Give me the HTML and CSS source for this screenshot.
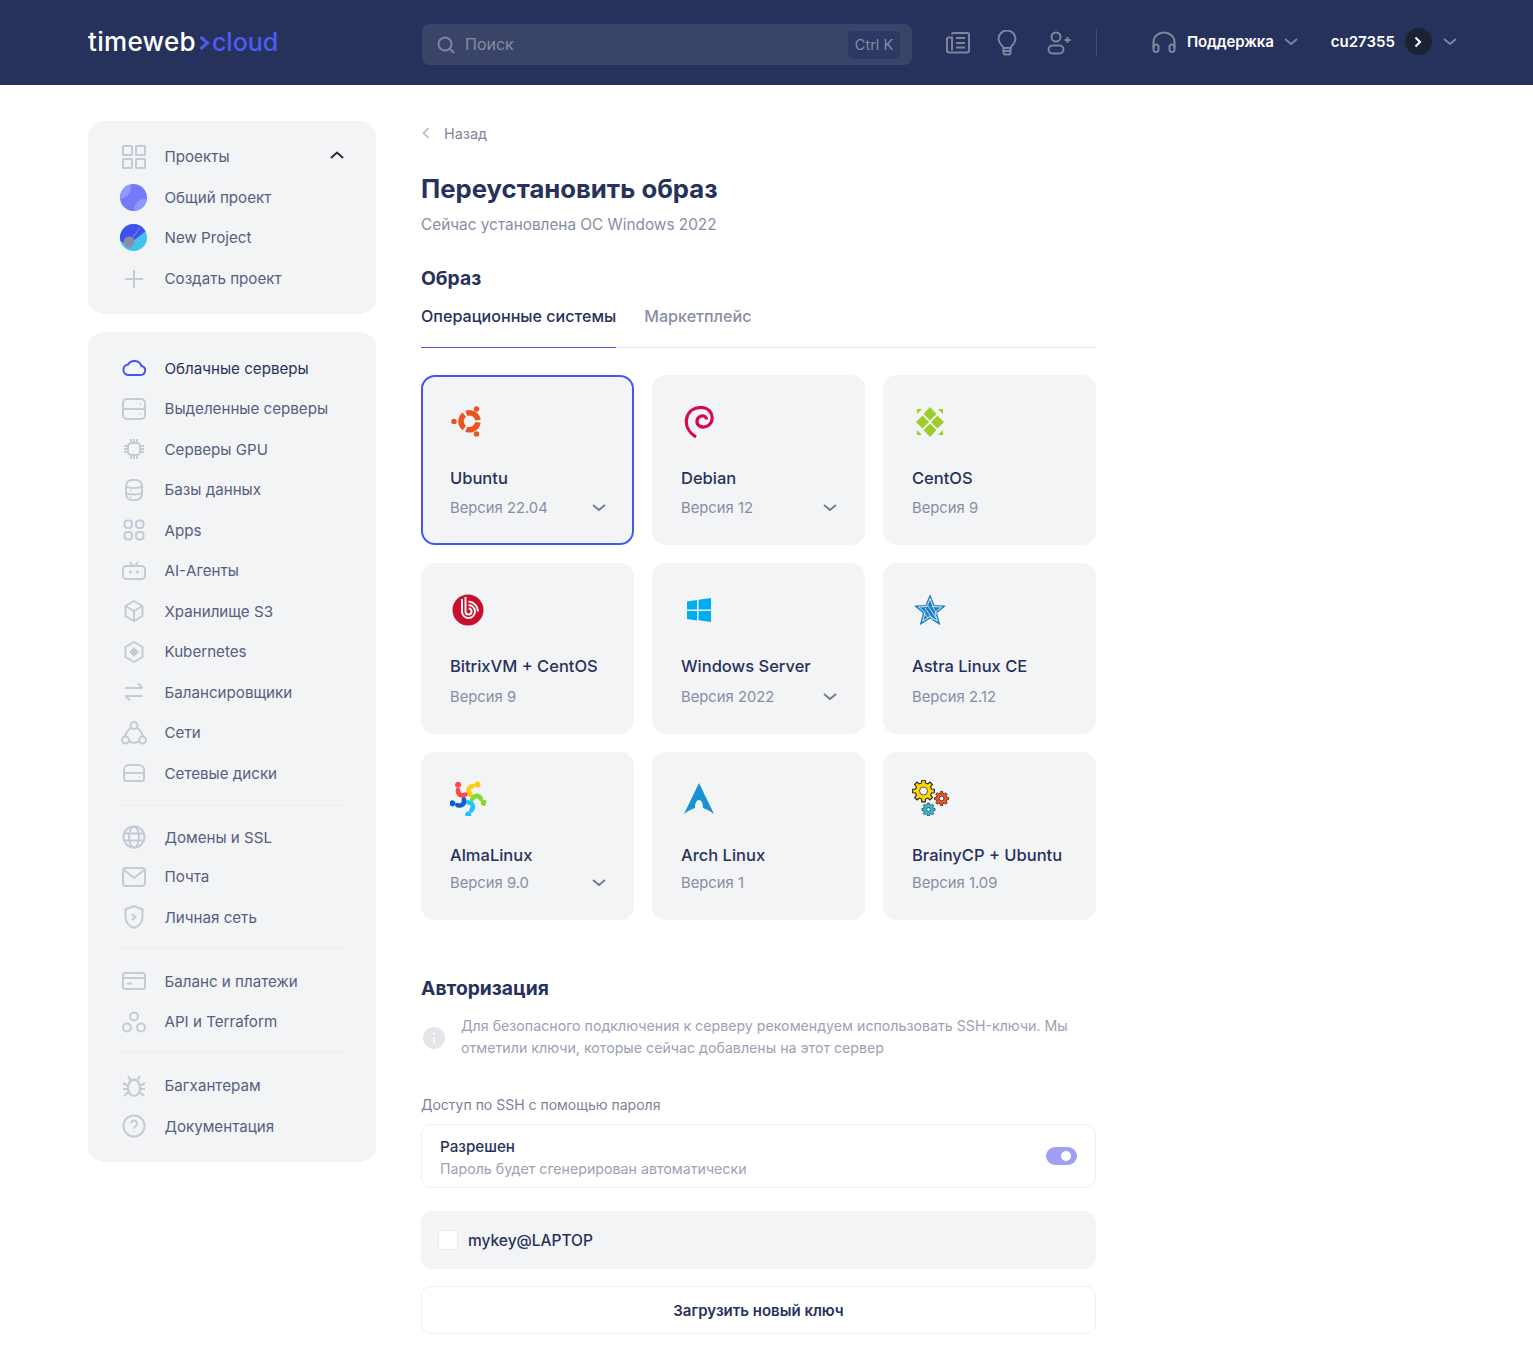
FILE: index.html
```html
<!DOCTYPE html>
<html lang="ru">
<head>
<meta charset="utf-8">
<title>timeweb cloud</title>
<link rel="stylesheet" href="styles.css">
</head>
<body>
<svg class="defs" width="0" height="0"><defs>
<polygon id="gear" points="7.28,-1.81 9.88,-1.56 9.88,1.56 7.28,1.81 6.43,3.86 8.09,5.88 5.88,8.09 3.86,6.43 1.81,7.28 1.56,9.88 -1.56,9.88 -1.81,7.28 -3.86,6.43 -5.88,8.09 -8.09,5.88 -6.43,3.86 -7.28,1.81 -9.88,1.56 -9.88,-1.56 -7.28,-1.81 -6.43,-3.86 -8.09,-5.88 -5.88,-8.09 -3.86,-6.43 -1.81,-7.28 -1.56,-9.88 1.56,-9.88 1.81,-7.28 3.86,-6.43 5.88,-8.09 8.09,-5.88 6.43,-3.86"/>
<path id="blade" d="M2.500 -3.500C-.5 -6.500 -.5 -10.500 4.500 -12" fill="none" stroke-width="4.600" stroke-linecap="round"/>
</defs></svg>
<header class="topbar">
  <div class="logo"><span>timeweb</span><svg class="logo-arrow" viewBox="0 0 12 18" width="12" height="18"><path d="M2.500 3l7 6-7 6" fill="none" stroke="#4b5cf0" stroke-width="3"/></svg><span class="logo-blue">cloud</span></div>
  <div class="search">
    <svg viewBox="0 0 18 18" width="18" height="18" class="tb-ic"><circle cx="8" cy="8" r="6.500"/><path d="M13 13l4 4"/></svg>
    <span class="search-text">Поиск</span>
    <span class="kbd">Ctrl K</span>
  </div>
  <div class="tb-icons">
    <svg viewBox="0 0 24 22" width="24" height="22" class="tb-ic"><path d="M6 2.500a1.500 1.500 0 0 1 1.500-1.500h14a1.500 1.500 0 0 1 1.500 1.500v16a2 2 0 0 1-2 2H3a2 2 0 0 1-2-2V7a1.500 1.500 0 0 1 1.500-1.500H6v13"/><path d="M10 6h9M10 11h9M10 15.500h9"/></svg>
    <svg viewBox="0 0 20 26" width="20" height="26" class="tb-ic"><path d="M6.500 18C6 15.500 1.500 13.500 1.500 9a8.500 8.500 0 0 1 17 0c0 4.500-4.500 6.500-5 9z"/><path d="M6.500 18v4.500a2 2 0 0 0 2 2h3a2 2 0 0 0 2-2V18M7 21h6"/></svg>
    <svg viewBox="0 0 25 24" width="25" height="24" class="tb-ic tb-user"><circle cx="9" cy="6" r="4.500"/><rect x="1.500" y="14.500" width="15" height="8" rx="4"/><path d="M20.500 6v6M17.500 9h6"/></svg>
  </div>
  <div class="tb-sep"></div>
  <div class="support">
    <svg viewBox="0 0 24 22" width="24" height="22" class="tb-ic"><path d="M1.500 17V11a10.500 9.500 0 0 1 21 0v6"/><rect x="1.500" y="13.500" width="5" height="7.500" rx="2.500"/><rect x="17.500" y="13.500" width="5" height="7.500" rx="2.500"/></svg>
    <span class="support-text">Поддержка</span>
    <svg viewBox="0 0 14 8" width="14" height="8" class="tb-chev"><path d="M1 1l6 5 6-5"/></svg>
  </div>
  <div class="user">
    <span class="user-name">cu27355</span>
    <span class="user-badge"><svg viewBox="0 0 8 12" width="8" height="12"><path d="M1.500 1.500L6 6l-4.500 4.500" fill="none" stroke="#fff" stroke-width="2"/></svg></span>
    <svg viewBox="0 0 14 8" width="14" height="8" class="tb-chev"><path d="M1 1l6 5 6-5"/></svg>
  </div>
</header>

<div class="layout">
  <aside class="sidebar">
    <nav class="side-card projects">
      <div class="nav-row head">
        <span class="nav-ic"><svg viewBox="0 0 24 24" width="24" height="24"><rect x="1" y="1" width="9" height="9" rx=".5"/><rect x="14" y="1" width="9" height="9" rx=".5"/><rect x="1" y="14" width="9" height="9" rx=".5"/><rect x="14" y="14" width="9" height="9" rx=".5"/></svg></span>
        <span>Проекты</span>
        <svg class="collapse" viewBox="0 0 14 8" width="14" height="8"><path d="M1 7l6-5.500L13 7" fill="none" stroke="#2b2f3a" stroke-width="2"/></svg>
      </div>
      <div class="nav-row common">
        <span class="nav-ic"><svg class="fill" viewBox="0 0 27 27" width="27" height="27"><defs><clipPath id="a1"><circle cx="13.500" cy="13.500" r="13.500"/></clipPath></defs><g clip-path="url(#a1)"><rect width="27" height="27" fill="#747bfb"/><circle cx="-1" cy="3" r="12" fill="#9297f9"/><circle cx="25" cy="26" r="11" fill="#9297f9"/></g></svg></span>
        <span>Общий проект</span>
      </div>
      <div class="nav-row">
        <span class="nav-ic"><svg class="fill" viewBox="0 0 27 27" width="27" height="27"><defs><clipPath id="a2"><circle cx="13.500" cy="13.500" r="13.500"/></clipPath></defs><g clip-path="url(#a2)"><rect width="27" height="27" fill="#41c3ec"/><path d="M0 0h27v6L8 21 0 17z" fill="#4150ef"/><path d="M9 18L20 4" stroke="#8d90b0" stroke-width="1"/><circle cx="9" cy="18" r="5.500" fill="#8a8da5"/></g></svg></span>
        <span>New Project</span>
      </div>
      <div class="nav-row create">
        <span class="nav-ic"><svg viewBox="0 0 20 20" width="20" height="20"><path d="M10 1v18M1 10h18"/></svg></span>
        <span>Создать проект</span>
      </div>
    </nav>

    <nav class="side-card menu">
      <div class="nav-row active">
        <span class="nav-ic"><svg viewBox="0 0 24 16" width="24" height="16"><path d="M6 15h12.500a4.500 4.500 0 0 0 1-8.900A7.500 7.500 0 0 0 6 4.500 5.300 5.300 0 0 0 6 15z"/></svg></span>
        <span>Облачные серверы</span>
      </div>
      <div class="nav-row">
        <span class="nav-ic"><svg viewBox="0 0 24 22" width="24" height="22"><rect x="1" y="1" width="22" height="20" rx="4"/><path d="M1 11h22M18 6h1M18 16h1"/></svg></span>
        <span>Выделенные серверы</span>
      </div>
      <div class="nav-row">
        <span class="nav-ic"><svg viewBox="0 0 22 22" width="22" height="22"><rect x="5" y="5" width="12" height="12" rx="3.500"/><path d="M8 1v3M11 1v3M14 1v3M8 18v3M11 18v3M14 18v3M1 8h3M1 11h3M1 14h3M18 8h3M18 11h3M18 14h3"/></svg></span>
        <span>Серверы GPU</span>
      </div>
      <div class="nav-row">
        <span class="nav-ic"><svg viewBox="0 0 18 22" width="18" height="22"><rect x="1" y="1" width="16" height="20" rx="6"/><path d="M1 7.500c3 2 13 2 16 0M1 14c3 2 13 2 16 0M5 11.500h1M5 18h1"/></svg></span>
        <span>Базы данных</span>
      </div>
      <div class="nav-row">
        <span class="nav-ic"><svg viewBox="0 0 22 22" width="22" height="22"><rect x="1.500" y="1.500" width="7.500" height="7.500" rx="3"/><rect x="13" y="1.500" width="7.500" height="7.500" rx="3"/><rect x="1.500" y="13" width="7.500" height="7.500" rx="3"/><rect x="13" y="13" width="7.500" height="7.500" rx="3"/></svg></span>
        <span>Apps</span>
      </div>
      <div class="nav-row">
        <span class="nav-ic"><svg viewBox="0 0 24 19" width="24" height="19"><rect x="1" y="5" width="22" height="13" rx="3.500"/><path d="M8 1l3 4M16 1l-3 4"/><circle class="dot" cx="8.500" cy="11" r="1.500"/><circle class="dot" cx="15.500" cy="11" r="1.500"/></svg></span>
        <span>AI-Агенты</span>
      </div>
      <div class="nav-row">
        <span class="nav-ic"><svg viewBox="0 0 20 22" width="20" height="22"><path d="M10 1l8.500 5v10L10 21l-8.500-5V6zM1.500 6l8.500 5 8.500-5M10 11v10"/></svg></span>
        <span>Хранилище S3</span>
      </div>
      <div class="nav-row">
        <span class="nav-ic"><svg viewBox="0 0 20 22" width="20" height="22"><path d="M10 1l8.500 5v10L10 21l-8.500-5V6z"/><circle class="dot" cx="10" cy="11" r="3.500"/><path d="M10 6.500v9M5.500 11h9"/></svg></span>
        <span>Kubernetes</span>
      </div>
      <div class="nav-row">
        <span class="nav-ic"><svg viewBox="0 0 20 20" width="20" height="20"><path d="M1 6h17M14 1.500L18.500 6M1.500 14h17M6 18.500L1.500 14"/></svg></span>
        <span>Балансировщики</span>
      </div>
      <div class="nav-row">
        <span class="nav-ic"><svg viewBox="0 0 26 24" width="26" height="24"><circle cx="13" cy="4.500" r="3.500"/><circle cx="4.500" cy="19" r="3.500"/><circle cx="21.500" cy="19" r="3.500"/><path d="M10.500 6.500C7 9 4.500 12 4 15.500M15.500 6.500C19 9 21.500 12 22 15.500M8 20.500c3 1.500 7 1.500 10 0"/></svg></span>
        <span>Сети</span>
      </div>
      <div class="nav-row">
        <span class="nav-ic"><svg viewBox="0 0 22 18" width="22" height="18"><path d="M1 10V6a5 5 0 0 1 5-5h10a5 5 0 0 1 5 5v4"/><rect x="1" y="9" width="20" height="8" rx="2.500"/><path d="M16 13h1"/></svg></span>
        <span>Сетевые диски</span>
      </div>
      <div class="nav-sep first"></div>
      <div class="nav-row">
        <span class="nav-ic"><svg viewBox="0 0 24 24" width="24" height="24"><circle cx="12" cy="12" r="10.500"/><ellipse cx="12" cy="12" rx="5" ry="10.500"/><path d="M2 8.500h20M2 15.500h20"/></svg></span>
        <span>Домены и SSL</span>
      </div>
      <div class="nav-row mail">
        <span class="nav-ic"><svg viewBox="0 0 24 20" width="24" height="20"><rect x="1" y="1" width="22" height="18" rx="3"/><path d="M2 3l10 8 10-8"/></svg></span>
        <span>Почта</span>
      </div>
      <div class="nav-row">
        <span class="nav-ic"><svg viewBox="0 0 20 24" width="20" height="24"><path d="M10 1l8.500 3.500V12c0 5-3.500 9-8.500 11C5 21 1.500 17 1.500 12V4.500z"/><path d="M8 9l3.500 3L8 15"/></svg></span>
        <span>Личная сеть</span>
      </div>
      <div class="nav-sep"></div>
      <div class="nav-row">
        <span class="nav-ic"><svg viewBox="0 0 24 18" width="24" height="18"><rect x="1" y="1" width="22" height="16" rx="2.500"/><path d="M1 6h22M5 11.500h5"/></svg></span>
        <span>Баланс и платежи</span>
      </div>
      <div class="nav-row">
        <span class="nav-ic"><svg viewBox="0 0 24 22" width="24" height="22"><circle cx="12" cy="5.500" r="4"/><circle cx="5" cy="16.500" r="4"/><circle cx="19" cy="16.500" r="4"/></svg></span>
        <span>API и Terraform</span>
      </div>
      <div class="nav-sep"></div>
      <div class="nav-row">
        <span class="nav-ic"><svg viewBox="0 0 24 24" width="24" height="24"><ellipse cx="12" cy="14" rx="6" ry="8"/><path d="M7 8.500c1-2 3-3 5-3s4 1 5 3M8.500 6L6 2M15.500 6L18 2M1 9l5.500 3M23 9l-5.500 3M1 15h5M23 15h-5M2 22l4.500-4M22 22l-4.500-4"/></svg></span>
        <span>Багхантерам</span>
      </div>
      <div class="nav-row">
        <span class="nav-ic"><svg viewBox="0 0 24 24" width="24" height="24"><circle cx="12" cy="12" r="10.500"/><path d="M9 9.500a3 3 0 1 1 4.500 2.600c-1 .6-1.500 1.200-1.500 2.400M12 17.500v.5"/></svg></span>
        <span>Документация</span>
      </div>
    </nav>
  </aside>

  <main class="content">
    <div class="back"><svg viewBox="0 0 8 12" width="8" height="12"><path d="M6.500 1L1.500 6l5 5" fill="none" stroke="#b4b8c6" stroke-width="1.600"/></svg><span>Назад</span></div>
    <h1 class="title">Переустановить образ</h1>
    <p class="subtitle">Сейчас установлена ОС Windows 2022</p>
    <h2 class="section">Образ</h2>
    <div class="tabs"><span class="tab current">Операционные системы</span><span class="tab">Маркетплейс</span></div>

    <div class="os-grid">
      <div class="os-card selected">
        <div class="os-ic"><svg viewBox="0 0 32 32" width="32" height="32" class="ubuntu"><path d="M26.920 16.480A8.500 8.500 0 0 1 15.320 23.180M13.270 22A8.500 8.500 0 0 1 13.270 8.600M15.320 7.420A8.500 8.500 0 0 1 26.920 14.120"/><circle cx="25.500" cy="3" r="2.700"/><circle cx="3" cy="15.500" r="2.700"/><circle cx="25.500" cy="28" r="2.700"/></svg></div>
        <div class="os-name">Ubuntu</div>
        <div class="os-ver"><span>Версия 22.04</span><svg viewBox="0 0 14 8" width="14" height="8" class="ver-chev"><path d="M1 1l6 5 6-5"/></svg></div>
      </div>
      <div class="os-card">
        <div class="os-ic debian-pad"><svg viewBox="0 0 32 32" width="32" height="32"><path d="M12 31C5 27 1.500 20 2.500 13 4 5 10 1.500 17 1.500c7 0 12 5 11 12-1 6.500-8 9-12.500 6.500-4-2.500-3-8.500 1.500-10 3-.8 5.500 1 5.500 3.500" fill="none" stroke="#d70751" stroke-width="3.200"/></svg></div>
        <div class="os-name">Debian</div>
        <div class="os-ver"><span>Версия 12</span><svg viewBox="0 0 14 8" width="14" height="8" class="ver-chev"><path d="M1 1l6 5 6-5"/></svg></div>
      </div>
      <div class="os-card">
        <div class="os-ic centos-pad"><svg viewBox="0 0 32 32" width="32" height="32" class="centos"><path d="M16 1l6.500 7-6.500 6.500L9.500 8zM8.500 9.500L15 16l-6.500 6.500L2 16zM23.500 9.500L30 16l-6.500 6.500L17 16zM16 17.500l6.500 6.500L16 31l-6.500-7zM3 3h5L3 8zM29 3h-5l5 5zM3 29h5l-5-5zM29 29h-5l5-5z"/></svg></div>
        <div class="os-name">CentOS</div>
        <div class="os-ver"><span>Версия 9</span></div>
      </div>
      <div class="os-card">
        <div class="os-ic"><svg viewBox="0 0 34 32" width="34" height="32"><circle cx="18" cy="16" r="15.500" fill="#c8102e"/><g fill="none" stroke="#f3f4f6" stroke-width="2"><path d="M12 5v12.500a6.500 6.500 0 1 0 6.500-6.500"/><path d="M15.500 3v14.500a3 3 0 1 0 3-3"/><path d="M18.500 7.500a10 10 0 0 1 9.500 10"/></g></svg></div>
        <div class="os-name">BitrixVM + CentOS</div>
        <div class="os-ver"><span>Версия 9</span></div>
      </div>
      <div class="os-card">
        <div class="os-ic win-pad"><svg viewBox="0 0 24 24" width="24" height="24"><path fill="#00adef" d="M0 3.500L10 2v9.500H0zM11.500 1.800L24 0v11.500H11.500zM0 13h10v9.500L0 21zM11.500 13H24v11l-12.500-1.800z"/></svg></div>
        <div class="os-name">Windows Server</div>
        <div class="os-ver"><span>Версия 2022</span><svg viewBox="0 0 14 8" width="14" height="8" class="ver-chev"><path d="M1 1l6 5 6-5"/></svg></div>
      </div>
      <div class="os-card">
        <div class="os-ic centos-pad"><svg viewBox="0 0 32 32" width="32" height="32"><path d="M16 1l4.200 10.500 11 .5-8.500 7 3 11.500-9.700-6.300-9.700 6.300 3-11.500L.8 12l11-.5z" fill="#1a7fc6" stroke="#1a7fc6" stroke-width=".8"/><path d="M16 4.500l3 8 8.500.5-6.500 5.500 2.300 8.700-7.300-4.700-7.300 4.700 2.300-8.700L4.500 13l8.500-.5z" fill="none" stroke="#f3f4f6" stroke-width=".9"/><path d="M11 14l8 12M14 12l8 12M18 12l5 8M10 19l4 5" stroke="#f3f4f6" stroke-width=".8"/></svg></div>
        <div class="os-name">Astra Linux CE</div>
        <div class="os-ver"><span>Версия 2.12</span></div>
      </div>
      <div class="os-card">
        <div class="os-ic alma-pad"><svg viewBox="-18 -18 36 36" width="36" height="36"><g stroke="#ffcb12"><use href="#blade"/><circle cx="9.500" cy="-13.500" r="3" fill="#ffcb12" stroke="none"/></g><g stroke="#86da2f" transform="rotate(72)"><use href="#blade"/><circle cx="9.500" cy="-13.500" r="3" fill="#86da2f" stroke="none"/></g><g stroke="#24c2ff" transform="rotate(144)"><use href="#blade"/><circle cx="9.500" cy="-13.500" r="3" fill="#24c2ff" stroke="none"/></g><g stroke="#0b5fd1" transform="rotate(216)"><use href="#blade"/><circle cx="9.500" cy="-13.500" r="3" fill="#0b5fd1" stroke="none"/></g><g stroke="#ff4649" transform="rotate(288)"><use href="#blade"/><circle cx="9.500" cy="-13.500" r="3" fill="#ff4649" stroke="none"/></g></svg></div>
        <div class="os-name">AlmaLinux</div>
        <div class="os-ver"><span>Версия 9.0</span><svg viewBox="0 0 14 8" width="14" height="8" class="ver-chev"><path d="M1 1l6 5 6-5"/></svg></div>
      </div>
      <div class="os-card">
        <div class="os-ic arch-pad"><svg viewBox="0 0 32 32" width="32" height="32"><path fill="#1793d1" d="M16 0L1 31c4-2.800 7.500-5 11-6 0-5 1.500-8 4-8s4 3 4 8c3.500 1 7 3.200 11 6z"/></svg></div>
        <div class="os-name">Arch Linux</div>
        <div class="os-ver"><span>Версия 1</span></div>
      </div>
      <div class="os-card">
        <div class="os-ic alma-pad"><svg viewBox="0 0 38 36" width="38" height="36" class="gears"><use href="#gear" transform="translate(11.500 11) scale(1.100)" fill="#ffd500"/><circle cx="11.500" cy="11" r="4" fill="#f3f4f6"/><use href="#gear" transform="translate(29.500 18.500) scale(.72)" fill="#f4511e"/><circle cx="29.500" cy="18.500" r="2.300" fill="#f3f4f6"/><use href="#gear" transform="translate(16.500 29.500) scale(.66)" fill="#26c6da"/><circle cx="16.500" cy="29.500" r="2" fill="#f3f4f6"/></svg></div>
        <div class="os-name">BrainyCP + Ubuntu</div>
        <div class="os-ver"><span>Версия 1.09</span></div>
      </div>
    </div>

    <h2 class="section auth">Авторизация</h2>
    <div class="notice">
      <svg viewBox="0 0 22 22" width="22" height="22"><circle cx="11" cy="11" r="11" fill="#e3e5ea"/><rect x="9.800" y="9.500" width="2.400" height="7" rx="1" fill="#f6f7f9"/><circle cx="11" cy="6.800" r="1.400" fill="#f6f7f9"/></svg>
      <p>Для безопасного подключения к серверу рекомендуем использовать SSH-ключи. Мы отметили ключи, которые сейчас добавлены на этот сервер</p>
    </div>
    <div class="field-label">Доступ по SSH с помощью пароля</div>
    <div class="toggle-box">
      <div class="tb-text"><div class="tb-title">Разрешен</div><div class="tb-sub">Пароль будет сгенерирован автоматически</div></div>
      <span class="toggle"><span class="thumb"></span></span>
    </div>
    <div class="key-row"><span class="check"></span><span>mykey@LAPTOP</span></div>
    <div class="upload">Загрузить новый ключ</div>
  </main>
</div>
</body>
</html>
```

FILE: styles.css
```css
* { box-sizing: border-box; }
html, body { margin: 0; padding: 0; }
body { background: #fff; font-family: Inter, "Noto Sans", sans-serif; color: #27325c; font-size: 15px; }
.defs { position: absolute; }

.topbar { height: 85px; background: #27325c; display: flex; align-items: center; padding-left: 88px; }
.logo { width: 334px; display: flex; align-items: center; font-size: 26px; font-weight: 500; color: #fff; height: 30px; margin-top: -2px; letter-spacing: .3px; }
.logo-arrow { margin: 2px 2px 0 2px; }
.logo-blue { color: #4b5cf0; font-size: 25px; letter-spacing: 0; }
.search { width: 490px; height: 41px; background: #3a4468; border-radius: 8px; display: flex; align-items: center; padding: 0 12px 0 15px; margin-top: 4px; }
.search-text { margin-left: 10px; color: #858ba3; font-size: 16px; flex: 1; padding-bottom: 2px; }
.kbd { background: #2e3963; color: #858ba3; font-size: 14.5px; border-radius: 5px; height: 28px; width: 52px; display: flex; align-items: center; justify-content: center; }
.tb-ic { fill: none; stroke: #7f859e; stroke-width: 2; flex: none; }
.tb-chev { fill: none; stroke: #7f859e; stroke-width: 1.800; flex: none; }
.tb-icons { display: flex; align-items: center; gap: 27px; margin-left: 34px; }
.tb-user { margin-left: 3px; }
.tb-sep { width: 1px; height: 27px; background: #434d72; margin-left: 24px; margin-top: -1px; }
.support { display: flex; align-items: center; margin-left: 55px; margin-top: -2px; }
.support-text { color: #fff; font-weight: 600; font-size: 15px; margin: 0 10px 0 11px; letter-spacing: -.1px; }
.user { display: flex; align-items: center; margin-left: 33px; margin-top: -2px; }
.user-name { color: #fff; font-weight: 600; font-size: 15px; width: 74px; }
.user-badge { width: 27px; height: 27px; border-radius: 50%; background: #1a2332; display: flex; align-items: center; justify-content: center; margin-right: 11px; }

.layout { display: flex; align-items: flex-start; padding: 36px 0 0 88px; }
.sidebar { width: 288px; flex: none; display: flex; flex-direction: column; gap: 18px; }
.side-card { background: #f3f4f6; border-radius: 16px; }
.projects { padding: 15px 0; }
.menu { padding: 16px 0 15px; }
.nav-row { height: 40.5px; display: flex; align-items: center; padding-left: 32px; color: #575e80; font-size: 15.15px; position: relative; }
.nav-row.head { height: 41px; }
.nav-row.common { height: 40px; }
.nav-row.active { color: #27325c; }
.nav-row.create { margin-top: 1px; }
.nav-row.mail { margin-top: -1px; }
.nav-ic { width: 27px; height: 27px; display: flex; align-items: center; justify-content: center; margin-right: 17.5px; flex: none; }
.nav-ic svg { fill: none; stroke: #c6cad6; stroke-width: 2; }
.nav-ic svg.fill { stroke: none; }
.nav-ic .dot { fill: #c6cad6; stroke: none; }
.active .nav-ic svg { stroke: #4657f0; }
.collapse { position: absolute; left: 242px; top: 15px; }
.nav-sep { height: 1px; background: #ebecef; margin: 10px 32px 12.5px; }
.nav-sep.first { margin-top: 11px; margin-bottom: 11.5px; }

.content { width: 675px; margin-left: 45px; flex: none; padding-bottom: 29px; }
.back { display: flex; align-items: center; gap: 14px; height: 24px; color: #7f849c; font-size: 14.4px; }
.back svg { margin-left: 1px; }
.title { margin: 26px 0 0; font-size: 25.7px; line-height: 36px; font-weight: 700; color: #27325c; }
.subtitle { margin: 8px 0 0; font-size: 15.35px; line-height: 20px; color: #888da5; }
.section { margin: 30px 0 0; font-size: 19.3px; line-height: 26px; font-weight: 700; color: #27325c; }
.tabs { display: flex; gap: 28px; margin-top: 13px; border-bottom: 1px solid #e3e5ea; height: 44px; }
.tab { font-size: 16.1px; font-weight: 500; color: #888da5; line-height: 24px; height: 44px; }
.tab.current { color: #27325c; border-bottom: 1px solid #4657f0; }

.os-grid { display: grid; grid-template-columns: repeat(3, 213px); grid-template-rows: 170px 171px 168px; gap: 18px; margin-top: 27px; }
.os-card { background: #f3f4f6; border-radius: 14px; padding: 31px 29px 26.5px; display: flex; flex-direction: column; }
.os-card.selected { border: 2px solid #4657f0; padding: 29px 27px 24.5px; }
.os-ic { height: 32px; display: flex; }
.debian-pad svg { margin-left: 3px; }
.centos-pad svg { margin-left: 2px; }
.win-pad { padding: 4px 0 0 6px; }
.alma-pad { margin-top: -3px; height: 35px; }
.arch-pad svg { margin-left: 2px; }
.gears use { stroke: #222; stroke-width: 1; }
.gears circle { stroke: #222; stroke-width: .7; }
.ubuntu { fill: #e95420; margin-left: 1px; }
.ubuntu path { fill: none; stroke: #e95420; stroke-width: 5.5; }
.centos path { fill: #9ccd2a; }
.os-name { margin-top: 28px; font-size: 16.5px; line-height: 24px; color: #27325c; font-weight: 500; }
.os-ver { margin-top: auto; display: flex; align-items: center; justify-content: space-between; font-size: 14.8px; line-height: 22px; color: #888da5; }
.ver-chev { fill: none; stroke: #71768f; stroke-width: 1.800; margin-right: -1px; }

.auth { margin-top: 55px; }
.notice { display: flex; align-items: center; gap: 16px; margin-top: 14px; padding-left: 2px; }
.notice svg { flex: none; margin-top: 2px; }
.notice p { margin: 0; font-size: 14.2px; line-height: 22px; color: #9da1b4; width: 630px; }
.field-label { margin-top: 36px; font-size: 14px; line-height: 20px; color: #7d8299; }
.toggle-box { margin-top: 9px; height: 64px; border: 1.5px solid #eeeff2; border-radius: 10px; padding: 0 18px; display: flex; align-items: center; justify-content: space-between; }
.tb-text { padding-top: 3px; }
.tb-title { font-size: 15.2px; line-height: 22px; font-weight: 500; color: #27325c; }
.tb-sub { font-size: 14.2px; line-height: 22px; color: #9da1b4; }
.toggle { width: 31px; height: 18px; background: #9fa0f3; border-radius: 9px; position: relative; }
.thumb { position: absolute; right: 6px; top: 4px; width: 10px; height: 10px; border-radius: 50%; background: #fff; }
.key-row { margin-top: 23px; height: 58px; background: #f3f4f6; border-radius: 12px; display: flex; align-items: center; gap: 10px; padding-left: 17px; font-size: 15.5px; font-weight: 500; color: #27325c; }
.check { width: 20px; height: 20px; background: #fff; border: 1px solid #e9eaee; border-radius: 5px; }
.upload { margin-top: 17px; height: 48px; border: 1.5px solid #eeeff2; border-radius: 10px; display: flex; align-items: center; justify-content: center; font-size: 15px; font-weight: 600; color: #27325c; }
```
